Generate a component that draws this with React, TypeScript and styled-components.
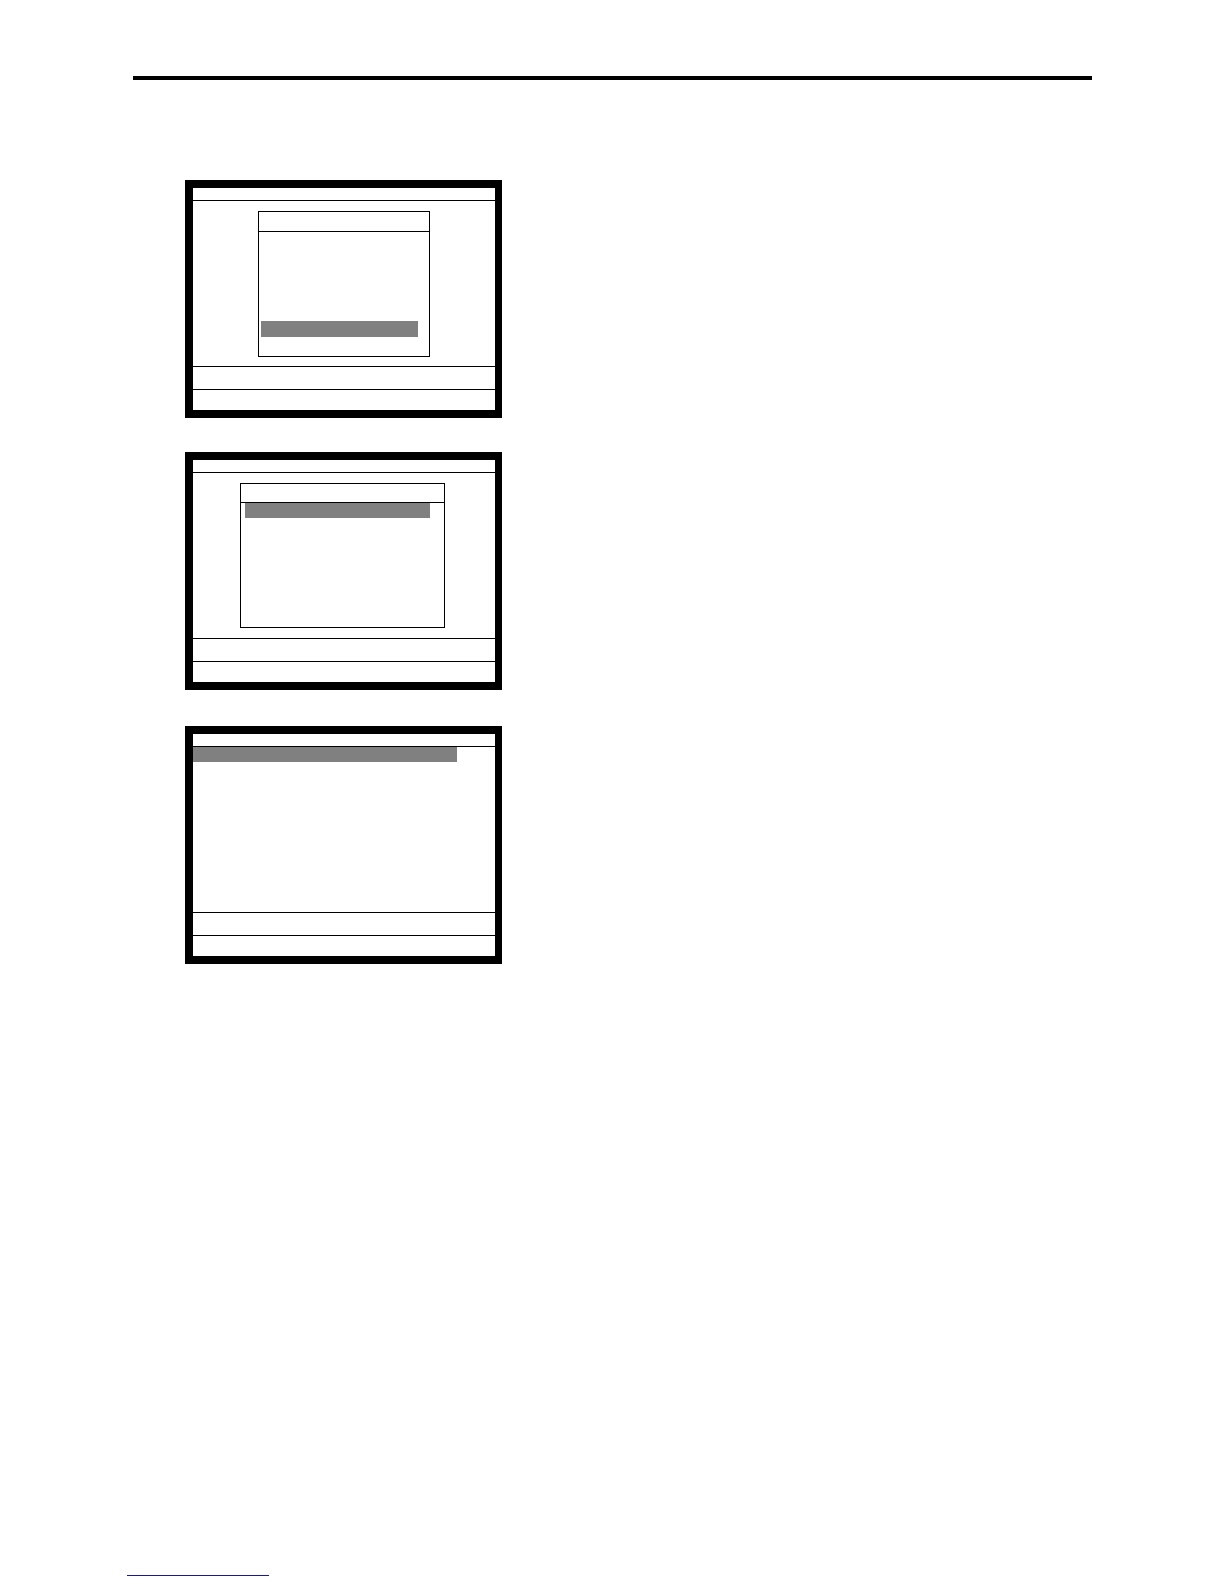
import React from 'react';
import styled, { createGlobalStyle } from 'styled-components';

const GlobalStyle = createGlobalStyle`
  html, body {
    margin: 0;
    padding: 0;
    background: #fff;
    font-family: "Liberation Sans", Arial, sans-serif;
  }
`;

const Page = styled.div`
  min-height: 1584px;
  box-sizing: border-box;
  display: flex;
  flex-direction: column;
  padding-top: 76px;
  padding-bottom: 8px;
`;

const TopRule = styled.div`
  margin-left: 133px;
  width: 959px;
  height: 4px;
  background: #000;
`;

const Screens = styled.div`
  display: flex;
  flex-direction: column;
  margin-top: 100px;
  margin-left: 185px;
`;

const Screen = styled.div<{ $gapAbove?: number }>`
  width: 317px;
  height: 238px;
  margin-top: ${p => p.$gapAbove ?? 0}px;
  box-sizing: border-box;
  border: 8px solid #000;
  border-right-width: 7px;
  background: #fff;
  display: flex;
  flex-direction: column;
`;

const TitleBar = styled.div`
  height: 12px;
  border-bottom: 1px solid #000;
`;

const Body = styled.div<{ $centered?: boolean }>`
  height: 165px;
  display: flex;
  flex-direction: column;
  align-items: ${p => (p.$centered ? 'center' : 'flex-start')};
  padding-top: ${p => (p.$centered ? '10px' : '0')};
  box-sizing: border-box;
`;

const StatusBar = styled.div`
  height: 22px;
  border-top: 1px solid #000;
`;

const KeyBar = styled.div`
  height: 20px;
  border-top: 1px solid #000;
`;

const Dialog = styled.div<{ $width: number; $height: number; $shift?: number }>`
  width: ${p => p.$width}px;
  height: ${p => p.$height}px;
  margin-right: ${p => p.$shift ?? 0}px;
  box-sizing: border-box;
  border: 1px solid #000;
  display: flex;
  flex-direction: column;
`;

const DialogTitle = styled.div<{ $height: number }>`
  height: ${p => p.$height}px;
  border-bottom: 1px solid #000;
  flex-shrink: 0;
`;

const List = styled.div<{ $inset: number }>`
  display: flex;
  flex-direction: column;
  padding-left: ${p => p.$inset}px;
`;

const Row = styled.div<{ $selected?: boolean; $width: number; $height?: number }>`
  height: ${p => p.$height ?? 15}px;
  width: ${p => p.$width}px;
  background: ${p => (p.$selected ? '#808080' : 'transparent')};
`;

const FooterLink = styled.div`
  margin-top: auto;
  margin-left: 127px;
  width: 142px;
  height: 1px;
  background: #1a1a8c;
`;

const rows = (count: number, selected: number, width: number, height?: number, gapBefore = 0) =>
  Array.from({ length: count }, (_, i) => (
    <Row
      key={i}
      $selected={i === selected}
      $width={width}
      $height={i === selected ? height : i === 0 ? 15 - gapBefore : undefined}
    />
  ));

export default function App() {
  return (
    <>
      <GlobalStyle />
      <Page>
        <TopRule />
        <Screens>
          <Screen>
            <TitleBar />
            <Body $centered>
              <Dialog $width={172} $height={146}>
                <DialogTitle $height={19} />
                <List $inset={2}>{rows(8, 6, 157, 16, 1)}</List>
              </Dialog>
            </Body>
            <StatusBar />
            <KeyBar />
          </Screen>

          <Screen $gapAbove={34}>
            <TitleBar />
            <Body $centered>
              <Dialog $width={205} $height={145} $shift={4}>
                <DialogTitle $height={18} />
                <List $inset={4}>{rows(8, 0, 185)}</List>
              </Dialog>
            </Body>
            <StatusBar />
            <KeyBar />
          </Screen>

          <Screen $gapAbove={36}>
            <TitleBar />
            <Body>
              <List $inset={0}>{rows(10, 0, 264)}</List>
            </Body>
            <StatusBar />
            <KeyBar />
          </Screen>
        </Screens>
        <FooterLink />
      </Page>
    </>
  );
}
